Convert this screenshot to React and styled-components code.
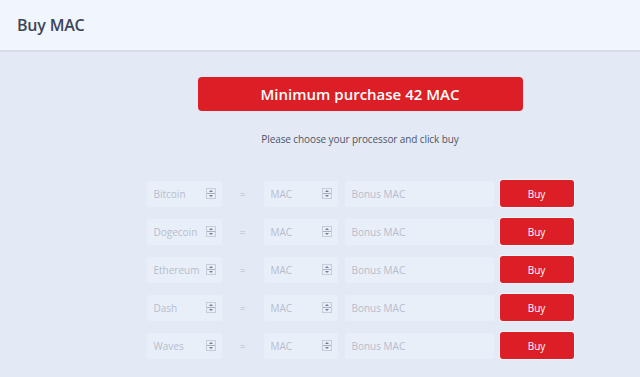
import React from "react"
import styled, { createGlobalStyle } from "styled-components"

const red = "#dc1f26"

const Global = createGlobalStyle`
	html, body {
		margin: 0;
		padding: 0;
		height: 100%;
		background: #e4eaf5;
		font-family: "Open Sans", "Noto Sans", sans-serif;
	}
	#root {
		min-height: 100%;
	}
`

const Page = styled.div`
	min-height: 377px;
	background: #e4eaf5;
`

const Header = styled.header`
	height: 52px;
	box-sizing: border-box;
	background: #f1f5fd;
	border-bottom: 2px solid #d7dde8;
	display: flex;
	align-items: center;
	padding-left: 17px;
`

const Title = styled.h1`
	margin: 0;
	font-size: 16px;
	font-weight: 600;
	color: #3c4658;
	letter-spacing: -0.2px;
`

const Main = styled.main`
	padding: 25px 0 0 80px;
	display: flex;
	flex-direction: column;
	align-items: center;
`

const Banner = styled.div`
	width: 325px;
	height: 34px;
	box-sizing: border-box;
	border-radius: 4px;
	background: ${ red };
	color: #ffffff;
	font-size: 15px;
	font-weight: 600;
	display: flex;
	align-items: center;
	justify-content: center;
`

const Hint = styled.p`
	margin: 21px 0 0;
	font-size: 10px;
	letter-spacing: -0.1px;
	color: #4c5566;
`

const Rows = styled.div`
	margin-top: 34px;
	display: flex;
	flex-direction: column;
	gap: 11px;
`

const Row = styled.div`
	display: flex;
	align-items: center;
	height: 27px;
`

const Field = styled.div`
	width: ${ props => props.width }px;
	height: 26px;
	box-sizing: border-box;
	border-radius: 3px;
	background: #e9eff9;
	display: flex;
	align-items: center;
	justify-content: space-between;
	padding: 0 6px 0 7px;
	font-size: 10px;
	color: #b5bdcc;
	margin-right: ${ props => props.gap || 0 }px;
`

const Equals = styled.span`
	width: 42px;
	text-align: center;
	font-size: 10px;
	color: #b5bdcc;
`

const BuyButton = styled.button`
	width: 74px;
	height: 27px;
	border: none;
	border-radius: 3px;
	background: ${ red };
	color: #ffffff;
	font-family: inherit;
	font-size: 10px;
	box-shadow: 0 0 0 1px rgba(255, 255, 255, 0.5);
	cursor: pointer;
`

const Spinner = () => (
	<svg width="10" height="11" viewBox="0 0 10 11">
		<rect x="0.5" y="0.5" width="9" height="10" fill="#e9edf4" stroke="#c8ced8" />
		<path d="M3 4 L5 2 L7 4 Z" fill="#6d7ea8" />
		<line x1="1" y1="5.5" x2="9" y2="5.5" stroke="#a9b1c0" />
		<path d="M3 7 L5 9 L7 7 Z" fill="#6d7ea8" />
	</svg>
)

const coins = [ "Bitcoin", "Dogecoin", "Ethereum", "Dash", "Waves" ]

export default function App() {
	return <Page>
		<Global />
		<Header>
			<Title>Buy MAC</Title>
		</Header>
		<Main>
			<Banner>Minimum purchase 42 MAC</Banner>
			<Hint>Please choose your processor and click buy</Hint>
			<Rows>
				{ coins.map(coin => <Row key={ coin }>
					<Field width={ 75 }>{ coin }<Spinner /></Field>
					<Equals>=</Equals>
					<Field width={ 74 } gap={ 7 }>MAC<Spinner /></Field>
					<Field width={ 149 } gap={ 6 }>Bonus MAC</Field>
					<BuyButton>Buy</BuyButton>
				</Row>) }
			</Rows>
		</Main>
	</Page>
}
